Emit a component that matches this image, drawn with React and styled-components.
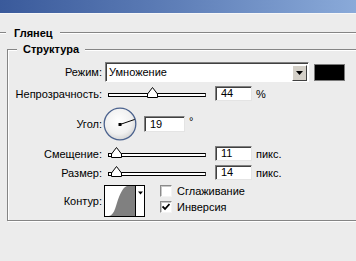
import React from "react";
import styled, { createGlobalStyle } from "styled-components";

const Global = createGlobalStyle`
  html, body { margin: 0; padding: 0; background: #ececec; }
  body {
    font-family: "Liberation Sans", Arial, sans-serif;
    font-size: 11px;
    color: #000;
  }
`;

const Window = styled.div`
  width: 356px;
  height: 261px;
  overflow: hidden;
  background: #ececec;
`;

const TitleBar = styled.div`
  height: 13px;
  background: linear-gradient(to right, #3a5a9b 0%, #5f7fb8 50%, #8aaad9 100%);
  border-bottom: 1px solid #f7f7f7;
`;

const HeadRow = styled.div`
  display: flex;
  align-items: center;
  height: 12px;
  margin-top: 13px;
`;

const Rule = styled.div`
  height: 1px;
  background: #858585;
  border-bottom: 1px solid #ffffff;
  width: ${p => (p.$w ? `${p.$w}px` : "auto")};
  flex: ${p => (p.$w ? "none" : 1)};
`;

const HeadText = styled.div`
  font-weight: bold;
  margin: 0 7px 0 8px;
  line-height: 12px;
`;

const Group = styled.div`
  position: relative;
  margin: 10px -20px 0 7px;
  border: 1px solid #858585;
  box-shadow: inset 1px 1px 0 #ffffff, 1px 1px 0 #ffffff;
  height: 172px;
  box-sizing: border-box;
  padding-top: 12px;
`;

const Legend = styled.div`
  position: absolute;
  left: 9px;
  top: -7px;
  padding: 0 6px;
  background: #ececec;
  font-weight: bold;
  line-height: 13px;
`;

const Row = styled.div`
  display: flex;
  align-items: center;
  height: ${p => p.$h}px;
  margin-top: ${p => p.$mt || 0}px;
`;

const Label = styled.div`
  width: 94px;
  text-align: right;
  white-space: nowrap;
  flex: none;
`;

const Select = styled.div`
  display: flex;
  align-items: center;
  width: 204px;
  height: 20px;
  margin-left: 3px;
  box-sizing: border-box;
  background: #fff;
  border: 1px solid;
  border-color: #808080 #ffffff #ffffff #808080;
  box-shadow: inset 1px 1px 0 #404040;
`;

const SelectText = styled.div`
  flex: 1;
  padding-left: 3px;
`;

const DropButton = styled.div`
  width: 15px;
  height: 16px;
  margin-right: 1px;
  margin-top: 1px;
  box-sizing: border-box;
  background: #d4d0c8;
  border: 1px solid;
  border-color: #ffffff #404040 #404040 #ffffff;
  display: flex;
  align-items: center;
  justify-content: center;
`;

const Swatch = styled.div`
  width: 31px;
  height: 17px;
  margin-left: 5px;
  box-sizing: border-box;
  background: #000;
  border: 1px solid #7a7a7a;
`;

const SliderBox = styled.div`
  position: relative;
  width: 98px;
  height: 15px;
  margin-left: ${p => p.$ml}px;
  flex: none;
`;

const Track = styled.div`
  position: absolute;
  left: 0;
  right: 0;
  top: 7px;
  height: 4px;
  box-sizing: border-box;
  background: #fff;
  border: 1px solid #000;
  border-right-color: #404040;
`;

const Thumb = styled.svg`
  position: absolute;
  top: 1px;
  width: 11px;
  height: 11px;
  margin-left: -5px;
`;

const Field = styled.div`
  width: ${p => p.$w}px;
  height: ${p => p.$hh || 15}px;
  margin-left: ${p => p.$ml}px;
  box-sizing: border-box;
  background: #fff;
  border: 1px solid;
  border-color: #808080 #e4e4e4 #e4e4e4 #808080;
  box-shadow: inset 1px 1px 0 #404040;
  padding-left: 5px;
  line-height: ${p => (p.$hh || 15) - 2}px;
  flex: none;
`;

const Unit = styled.div`
  margin-left: ${p => p.$ml}px;
  align-self: ${p => (p.$top ? "flex-start" : "center")};
  margin-top: ${p => (p.$top ? "8px" : "0")};
`;

const Dial = styled.svg`
  width: 34px;
  height: 34px;
  margin-left: 1px;
  flex: none;
`;

const ContourBox = styled.div`
  display: flex;
  width: 41px;
  height: 32px;
  margin-left: 2px;
  box-sizing: border-box;
  border: 1px solid #000;
  background: #fff;
  flex: none;
`;

const ContourArrow = styled.div`
  flex: 1;
  border-left: 1px solid #000;
  display: flex;
  justify-content: center;
  padding-top: 5px;
`;

const Checks = styled.div`
  display: flex;
  flex-direction: column;
  gap: 4px;
  margin-left: 15px;
  align-self: flex-start;
`;

const CheckRow = styled.div`
  display: flex;
  align-items: center;
  height: 12px;
`;

const Box = styled.div`
  width: 12px;
  height: 12px;
  box-sizing: border-box;
  background: #fff;
  border: 1px solid;
  border-color: #8a8a8a #f4f4f4 #f4f4f4 #8a8a8a;
  box-shadow: inset 1px 1px 0 #c8c8c8;
  display: flex;
  align-items: center;
  justify-content: center;
`;

const CheckText = styled.div`
  margin-left: 5px;
`;

const ArrowDown = ({ w = 7 }) => (
  <svg width={w} height="4" viewBox="0 0 7 4">
    <polygon points="0,0 7,0 3.5,4" fill="#000" />
  </svg>
);

const Slider = ({ pos, ml = 6 }) => (
  <SliderBox $ml={ml}>
    <Track />
    <Thumb viewBox="0 0 11 11" style={{ left: `${pos}%` }}>
      <polygon points="0.5,10.5 0.5,7 5.5,0.5 10.5,7 10.5,10.5" fill="#fff" stroke="#000" />
    </Thumb>
  </SliderBox>
);

const Check = ({ checked, children }) => (
  <CheckRow>
    <Box>
      {checked && (
        <svg width="8" height="8" viewBox="0 0 8 8">
          <polyline points="0.5,3.5 3,6 7.5,1" fill="none" stroke="#000" strokeWidth="1.8" />
        </svg>
      )}
    </Box>
    <CheckText>{children}</CheckText>
  </CheckRow>
);

const angle = 19;
const rad = (angle * Math.PI) / 180;

export default function App() {
  return (
    <Window>
      <Global />
      <TitleBar />
      <HeadRow>
        <Rule $w={6} />
        <HeadText>Глянец</HeadText>
        <Rule />
      </HeadRow>
      <Group>
        <Legend>Структура</Legend>

        <Row $h={20}>
          <Label>Режим:</Label>
          <Select>
            <SelectText>Умножение</SelectText>
            <DropButton>
              <ArrowDown />
            </DropButton>
          </Select>
          <Swatch />
        </Row>

        <Row $h={15} $mt={4}>
          <Label>Непрозрачность:</Label>
          <Slider pos={45} />
          <Field $w={37} $ml={9}>44</Field>
          <Unit $ml={4}>%</Unit>
        </Row>

        <Row $h={34} $mt={6}>
          <Label>Угол:</Label>
          <Dial viewBox="0 0 34 34">
            <defs>
              <radialGradient id="dialFill" cx="45%" cy="40%" r="60%">
                <stop offset="0%" stopColor="#ffffff" />
                <stop offset="70%" stopColor="#f0f0f0" />
                <stop offset="100%" stopColor="#d6d6d6" />
              </radialGradient>
            </defs>
            <circle cx="17" cy="17" r="15.8" fill="url(#dialFill)" stroke="#4b628e" strokeWidth="1.3" />
            <line
              x1="17"
              y1="17.5"
              x2={17 + 15.5 * Math.cos(rad)}
              y2={17.5 - 15.5 * Math.sin(rad)}
              stroke="#000"
              strokeWidth="1"
            />
            <rect x="15.5" y="16" width="3" height="3" fill="#000" />
          </Dial>
          <Field $w={41} $hh={16} $ml={7}>19</Field>
          <Unit $ml={4} $top>°</Unit>
        </Row>

        <Row $h={15} $mt={5}>
          <Label>Смещение:</Label>
          <Slider pos={8} />
          <Field $w={37} $ml={9}>11</Field>
          <Unit $ml={4}>пикс.</Unit>
        </Row>

        <Row $h={15} $mt={4}>
          <Label>Размер:</Label>
          <Slider pos={8} />
          <Field $w={37} $ml={9}>14</Field>
          <Unit $ml={4}>пикс.</Unit>
        </Row>

        <Row $h={32} $mt={5}>
          <Label>Контур:</Label>
          <ContourBox>
            <svg width="30" height="30" viewBox="0 0 30 30">
              <path d="M4,30 C10,29 11,18 14,11 C17,4 19,1 22,0 L30,0 L30,30 Z" fill="#808080" />
            </svg>
            <ContourArrow>
              <ArrowDown w={5} />
            </ContourArrow>
          </ContourBox>
          <Checks>
            <Check>Сглаживание</Check>
            <Check checked>Инверсия</Check>
          </Checks>
        </Row>
      </Group>
    </Window>
  );
}
